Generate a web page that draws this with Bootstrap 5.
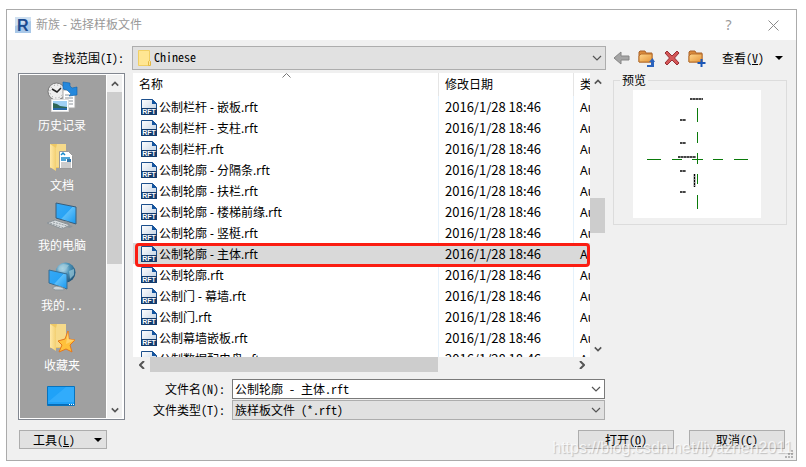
<!DOCTYPE html>
<html lang="zh-CN">
<head>
<meta charset="utf-8">
<meta name="viewport" content="width=device-width, initial-scale=1">
<title>新族 - 选择样板文件</title>
<link href="https://cdn.jsdelivr.net/npm/bootstrap@5.3.0/dist/css/bootstrap.min.css" rel="stylesheet">
<style>
body{font:12px/16px "Noto Sans","Noto Sans CJK SC",sans-serif;color:#000;background:#fff;padding:9px 9px 5px 6px}
.dlg{border:1px solid #ababab;background:#f0f0f0}
.dlg-title{height:30px;background:#fff;color:#999;padding-left:8px}
.dlg-title h1{font-size:12px;line-height:16px;font-weight:400;padding-left:5px}
.win-btn{border:0;background:none;padding:0;color:#999;width:45px;height:28px;font-size:14px}
.win-btn svg{display:block;margin:0 auto}
.ui{font-family:"Noto Sans CJK SC",sans-serif;font-feature-settings:"hwid" 1}
.ui button,.ui input,.ui select,.ui label{font-feature-settings:inherit}
.dlg-body{padding:6px 9px 11px 11px}
.lookbar{height:24px;margin-bottom:3px}
.look-label{width:106px;text-align:right}
.combo{appearance:none;border:1px solid #adadad;border-radius:0;background-color:#e1e1e1;height:20px;font-size:12px;line-height:16px;padding:0 20px 1px 2px;color:#000;min-width:0;
background-repeat:no-repeat;background-position:right 3px center;background-size:10px 6px;background-image:url("data:image/svg+xml,%3Csvg xmlns='http://www.w3.org/2000/svg' viewBox='0 0 10 6'%3E%3Cpath d='M1 1l4 4 4-4' fill='none' stroke='%23555' stroke-width='1.2'/%3E%3C/svg%3E")}
.combo-edit{background-color:#fff;border-color:#7a7a7a}
.combo-look{height:24px;padding:0 20px 3px 21px}
.look-icon{left:6px;top:4px}
.tools{width:181px;padding-left:7px}
.tool{border:0;background:none;padding:0;line-height:16px;font-size:12px;color:#000;display:flex;align-items:center}
.places{width:107px;border:1px solid #828790;background:#fff;padding:1px}
.place-list{background:#a0a0a0;padding-top:1px;overflow:hidden;margin-right:1px}
.place{display:block;width:100%;height:60px;border:0;background:none;color:#fff;padding:0 2px 0 0;font-size:12px;line-height:16px;text-align:center}
.place:last-child{height:42px}
.place svg{display:block;margin:2px auto 4px}
.sbar{background:#f0f0f0;width:15px;flex:none;display:flex;flex-direction:column;align-items:center;justify-content:space-between}
.sbar .arrow{height:17px;display:flex;align-items:center}
.thumb{background:#cdcdcd}
.v-places{margin-right:1px}
.v-places .thumb{width:15px;height:172px;margin-bottom:auto}
.v-files .thumb{width:15px;height:35px;margin:108px 0 auto}
.h-files{width:auto;height:15px;flex-direction:row;padding-right:15px}
.h-files .arrow{width:17px;justify-content:center}
.h-files .thumb{height:15px;width:63%;margin-right:auto}
.files{height:284px;overflow:hidden;background:#fff}
.files table{table-layout:fixed;width:100%;margin:0;border-collapse:separate;border-spacing:0;font-family:"Noto Sans","Noto Sans CJK SC",sans-serif;font-feature-settings:normal}
.files th{font-weight:400;height:23px;padding:0 0 0 6px;border-right:1px solid #e5e5e5;white-space:nowrap;overflow:hidden;position:relative}
.files td{height:21px;padding:2px 0 0 6px;border-right:1px solid #e5f1fb;white-space:nowrap;overflow:hidden}
.files td:first-child{padding-left:8px}
.files th:last-child,.files td:last-child{border-right:0}
.files td svg{margin:-1px 2px 0 0;vertical-align:top}
.files .stamp{font:13px/16px "Noto Sans CJK SC",sans-serif;padding-top:1px}
.c-date{width:135px}.c-type{width:16px}
.picked td{background:#d9d9d9;border-right-color:#d9d9d9}
.sort-mark{left:50%;top:0;margin-left:-4px}
.ring{left:2px;right:0;top:170px;height:24px;border:3px solid #fb1d12;border-radius:4px;pointer-events:none}
.preview{width:174px;height:152px;border:1px solid #dcdcdc;margin-left:8px}
.preview legend{float:none;width:auto;font-size:12px;line-height:14px;padding:0 2px;margin:0 0 0 6px}
.preview svg{display:block;background:#fff;margin:3px 0 0 19px}
.fields{display:grid;grid-template-columns:92px 1fr;column-gap:7px;row-gap:1px;margin-top:7px;align-items:center}
.fields label{text-align:right}
.actions{margin-top:10px}
.cmd{border:1px solid #adadad;background:#e1e1e1;height:19px;width:96px;padding:0;font-size:12px;line-height:16px;color:#000}
.cmd-tools{width:88px;margin-left:1px;padding:0 4px 0 13px}
.cmd-cancel{margin:0 2px 0 15px}
.watermark{right:13px;bottom:9px;font:16px/20px "Liberation Sans",sans-serif;color:rgba(255,255,255,.75);text-shadow:1px 1px 1px rgba(120,120,120,.4);pointer-events:none}
.grip{right:3px;bottom:2px}
</style>
<script src="https://cdn.jsdelivr.net/npm/bootstrap@5.3.0/dist/js/bootstrap.bundle.min.js"></script>
</head>
<body>
<svg width="0" height="0" class="position-absolute" aria-hidden="true">
<defs>
<linearGradient id="gp" x1="0" y1="0" x2="1" y2="1"><stop stop-color="#fff"/><stop offset="1" stop-color="#b9cbe0"/></linearGradient>
<linearGradient id="gb" x1="0" y1="0" x2="1" y2="1"><stop stop-color="#37a9f5"/><stop offset=".5" stop-color="#29a3f5"/><stop offset=".52" stop-color="#5bbefa"/><stop offset="1" stop-color="#1596ee"/></linearGradient>
<linearGradient id="gf" x1="0" y1="0" x2="1" y2="1"><stop stop-color="#ffd68c"/><stop offset="1" stop-color="#e5953a"/></linearGradient>
<linearGradient id="gy" x1="0" y1="0" x2="1" y2="0"><stop stop-color="#ffe9a8"/><stop offset="1" stop-color="#f2cf72"/></linearGradient>
<radialGradient id="gg" cx=".35" cy=".3" r=".8"><stop stop-color="#cfeaf5"/><stop offset=".45" stop-color="#4b93b8"/><stop offset="1" stop-color="#184a70"/></radialGradient>
<symbol id="rft" viewBox="0 0 16 16"><path d="M.5.5h11l4 4v11H.5z" fill="url(#gp)" stroke="#1c4f8c"/><path d="M11 0l5 5h-5z" fill="#1455a0"/><path d="M0 9h16v7H0z" fill="#123b6d"/><text x="8" y="15" text-anchor="middle" font-family="Liberation Sans,sans-serif" font-weight="700" font-size="7" fill="#fff">RFT</text></symbol>
<symbol id="up" viewBox="0 0 10 6"><path d="M1 5l4-4 4 4" fill="none" stroke="#555" stroke-width="2"/></symbol>
<symbol id="down" viewBox="0 0 10 6"><path d="M1 1l4 4 4-4" fill="none" stroke="#555" stroke-width="2"/></symbol>
<symbol id="fold" viewBox="0 0 18 17"><path d="M1 2l1-1h5l1 2h6v9H1z" fill="#d9893b" stroke="#a9632a"/><path d="M1 12V6l2-2h11v8z" fill="url(#gf)" stroke="#b9712c"/></symbol>
<symbol id="yfold" viewBox="0 0 32 32"><path d="M4 3h16v24H4z" fill="#eec864"/><path d="M4 3l6 4v23l-6-4z" fill="url(#gy)"/><path d="M10 7l1-4h9v23H10z" fill="#f6da8a"/></symbol>
</defs>
</svg>
<main class="dlg position-relative">
<header class="dlg-title d-flex align-items-center">
<svg width="16" height="16" viewBox="0 0 16 16" aria-hidden="true"><path d="M0 0h16v16H0z" fill="#cfe0f1"/><path d="M0 9l16-5v12H0z" fill="#a9c8e8"/><text x="2" y="14" font-family="Liberation Sans,sans-serif" font-weight="700" font-size="16" fill="#1b4b8f">R</text></svg>
<h1 class="m-0 flex-grow-1">新族 - 选择样板文件</h1>
<button class="win-btn" type="button" aria-label="帮助">?</button>
<button class="win-btn" type="button" aria-label="关闭"><svg width="11" height="11" viewBox="0 0 11 11"><path d="M.5.5l10 10M10.500.5l-10 10" stroke="#8a8a8a" fill="none"/></svg></button>
</header>
<div class="dlg-body ui">
<div class="lookbar d-flex align-items-center">
<label class="look-label flex-shrink-0" for="look">查找范围(I):</label>
<div class="position-relative flex-grow-1 ms-2">
<select class="combo combo-look w-100 d-block" id="look"><option>Chinese</option></select>
<svg class="look-icon position-absolute" width="14" height="17" viewBox="0 0 14 17" aria-hidden="true"><path d="M.5.5h11v15H.5z" fill="#ffe692" stroke="#f1cf63"/><path d="M10.500 15.500v-4l1-1 1 1v4z" fill="#ffe692" stroke="#e4b944"/></svg>
</div>
<div class="tools d-flex align-items-center flex-shrink-0">
<button class="tool" type="button" aria-label="后退"><svg width="17" height="16" viewBox="0 0 17 16"><path d="M1 8l7-6v4h8v4H8v4z" fill="#a5a5a5" stroke="#858585"/></svg></button>
<button class="tool ms-2" type="button" aria-label="上一级"><svg width="18" height="17"><use href="#fold" width="18" height="17"/><path d="M9 15h4v-3h-2l3.500-4L17 12h-1v5H9z" fill="#2b63bd"/></svg></button>
<button class="tool ms-2" type="button" aria-label="删除"><svg width="16" height="16" viewBox="0 0 16 16"><path d="M3 1l5 5 5-5 2 2-4.500 5L15 13l-2 2-5-5-5 5-2-2 4.500-5L1 3z" fill="#d45757" stroke="#982e35"/></svg></button>
<button class="tool ms-2" type="button" aria-label="新建文件夹"><svg width="18" height="17"><use href="#fold" width="18" height="17"/><path d="M12.500 9h2v3h3v2h-3v3h-2v-3h-3v-2h3z" fill="#1a57b8"/></svg></button>
<button class="tool flex-grow-1 ms-3" type="button">查看(<u>V</u>)<svg class="ms-auto me-1" width="8" height="4" viewBox="0 0 8 4"><path d="M0 0h8L4 4z"/></svg></button>
</div>
</div>
<div class="d-flex">
<nav class="places d-flex me-2 flex-shrink-0" aria-label="位置">
<div class="place-list flex-grow-1">
<button class="place" type="button"><svg width="32" height="32" viewBox="0 0 32 32"><circle cx="10.500" cy="10.500" r="8.500" fill="#eee" stroke="#777"/><circle cx="10.500" cy="10.500" r="6.500" fill="none" stroke="#999" stroke-dasharray="1 2.400"/><path d="M6 8l5 3 4-4" fill="none" stroke="#222" stroke-width="1.500"/><path d="M17 9h12v18H17z" fill="#fff" stroke="#aaa"/><path d="M19 14h8M19 17h8M19 20h8M19 23h8" stroke="#8b9299"/><path d="M17 1l7 1v3l2 2 5-1v8l-8 1 2-2-4-4-4-1z" fill="#2488dc" stroke="#0e63ae" stroke-width=".6"/><path d="M5.500 18.500h17v12h-17z" fill="#fff" stroke="#ddd"/><path d="M7 20h14v9H7z" fill="#9fd0f4"/><path d="M7 22l4 1 3 2 7 1v3H7z" fill="#2e6656"/><path d="M7 27h14v2H7z" fill="#2869a8"/></svg>历史记录</button>
<button class="place" type="button"><svg width="32" height="32" viewBox="0 0 32 32"><use href="#yfold"/><path d="M13.500 10.500h9l4 4v13h-13z" fill="#fff" stroke="#999"/><path d="M15 14l2-2 2 2M15 17h9M15 19h5" stroke="#1489cc" fill="none" stroke-width="1.500"/><path d="M21 18h4v3h-4z" fill="#3577aa"/><path d="M15 22h10M15 24h10M15 26h10" stroke="#9a9a9a"/></svg>文档</button>
<button class="place" type="button"><svg width="32" height="32" viewBox="0 0 32 32"><path d="M10 2l20 4v17l-20-6z" fill="url(#gb)" stroke="#385e7c"/><path d="M19 20l4 1v3l4 1-3 2-7-2z" fill="#8b959b"/><path d="M1 22l8-3 15 5-8 4z" fill="#d9dee1" stroke="#8b9398"/><path d="M4 22l14 5M7 21l14 4" stroke="#939b9f" stroke-dasharray="2 1"/></svg>我的电脑</button>
<button class="place" type="button"><svg width="32" height="32" viewBox="0 0 32 32"><circle cx="19.500" cy="11.500" r="10" fill="url(#gg)"/><path d="M12 8l5-5 6 1-3 4-5 2zM23 10l5-2v6l-4 4z" fill="#9bc9d8" opacity=".7"/><path d="M3 9l18 4v15L3 22z" fill="url(#gb)" stroke="#3a6d91"/><path d="M10 25l5 1 4 2-2 1H9l-3-2z" fill="#ccd4d8" stroke="#8d979c"/></svg>我的...</button>
<button class="place" type="button"><svg width="32" height="32" viewBox="0 0 32 32"><use href="#yfold"/><path d="M22 10l1 8 6 1-5 5 2 7-6-3-7 3 3-7-4-4 7-2z" fill="#ffc13b" stroke="#e5781c"/><path d="M22 10l1 8 6 1-9 4z" fill="#ffe08a" opacity=".6"/></svg>收藏夹</button>
<button class="place" type="button" aria-label="桌面"><svg width="32" height="32" viewBox="0 0 32 32"><path d="M1.500 6.500h27v19h-27z" fill="#1fa2f8" stroke="#0873bd"/><path d="M2 22L20 7h8v15z" fill="#3db2ff" opacity=".6"/><path d="M2 24.500h26" stroke="#086bb5"/><path d="M23 24.500h5" stroke="#fff" stroke-dasharray="1 1"/></svg></button>
</div>
<div class="sbar v-places"><span class="arrow"><svg width="8" height="6"><use href="#up"/></svg></span><span class="thumb"></span><span class="arrow"><svg width="8" height="6"><use href="#down"/></svg></span></div>
</nav>
<div class="flex-grow-1">
<div class="d-flex">
<div class="flex-grow-1">
<div class="d-flex">
<div class="files flex-grow-1 position-relative">
<table>
<colgroup><col><col class="c-date"><col class="c-type"></colgroup>
<thead><tr><th scope="col">名称<svg class="sort-mark position-absolute" width="9" height="5" viewBox="0 0 9 5"><path d="M.5 4.500l4-4 4 4" fill="none" stroke="#777"/></svg></th><th scope="col">修改日期</th><th scope="col">类型</th></tr></thead>
<tbody>
<tr><td><svg width="16" height="16"><use href="#rft"/></svg>公制栏杆 - 嵌板.rft</td><td class="stamp">2016/1/28 18:46</td><td>Autodesk</td></tr>
<tr><td><svg width="16" height="16"><use href="#rft"/></svg>公制栏杆 - 支柱.rft</td><td class="stamp">2016/1/28 18:46</td><td>Autodesk</td></tr>
<tr><td><svg width="16" height="16"><use href="#rft"/></svg>公制栏杆.rft</td><td class="stamp">2016/1/28 18:46</td><td>Autodesk</td></tr>
<tr><td><svg width="16" height="16"><use href="#rft"/></svg>公制轮廓 - 分隔条.rft</td><td class="stamp">2016/1/28 18:46</td><td>Autodesk</td></tr>
<tr><td><svg width="16" height="16"><use href="#rft"/></svg>公制轮廓 - 扶栏.rft</td><td class="stamp">2016/1/28 18:46</td><td>Autodesk</td></tr>
<tr><td><svg width="16" height="16"><use href="#rft"/></svg>公制轮廓 - 楼梯前缘.rft</td><td class="stamp">2016/1/28 18:46</td><td>Autodesk</td></tr>
<tr><td><svg width="16" height="16"><use href="#rft"/></svg>公制轮廓 - 竖梃.rft</td><td class="stamp">2016/1/28 18:46</td><td>Autodesk</td></tr>
<tr class="picked"><td><svg width="16" height="16"><use href="#rft"/></svg>公制轮廓 - 主体.rft</td><td class="stamp">2016/1/28 18:46</td><td>Autodesk</td></tr>
<tr><td><svg width="16" height="16"><use href="#rft"/></svg>公制轮廓.rft</td><td class="stamp">2016/1/28 18:46</td><td>Autodesk</td></tr>
<tr><td><svg width="16" height="16"><use href="#rft"/></svg>公制门 - 幕墙.rft</td><td class="stamp">2016/1/28 18:46</td><td>Autodesk</td></tr>
<tr><td><svg width="16" height="16"><use href="#rft"/></svg>公制门.rft</td><td class="stamp">2016/1/28 18:46</td><td>Autodesk</td></tr>
<tr><td><svg width="16" height="16"><use href="#rft"/></svg>公制幕墙嵌板.rft</td><td class="stamp">2016/1/28 18:46</td><td>Autodesk</td></tr>
<tr><td><svg width="16" height="16"><use href="#rft"/></svg>公制数据配电盘.rft</td><td class="stamp">2016/1/28 18:46</td><td>Autodesk</td></tr>
</tbody>
</table>
<div class="ring position-absolute"></div>
</div>
<div class="sbar v-files"><span class="arrow"><svg width="8" height="6"><use href="#up"/></svg></span><span class="thumb"></span><span class="arrow"><svg width="8" height="6"><use href="#down"/></svg></span></div>
</div>
<div class="sbar h-files"><span class="arrow"><svg width="6" height="8" viewBox="0 0 6 8"><path d="M5 0L1 4l4 4" fill="none" stroke="#555" stroke-width="2"/></svg></span><span class="thumb"></span><span class="arrow"><svg width="6" height="8" viewBox="0 0 6 8"><path d="M1 0l4 4-4 4" fill="none" stroke="#555" stroke-width="2"/></svg></span></div>
<div class="fields">
<label for="fname">文件名(N):</label><input class="combo combo-edit" id="fname" type="text" value="公制轮廓 - 主体.rft">
<label for="ftype">文件类型(T):</label><select class="combo" id="ftype"><option>族样板文件 (*.rft)</option></select>
</div>
</div>
<fieldset class="preview flex-shrink-0">
<legend>预览</legend>
<svg width="128" height="128" viewBox="0 0 128 128" role="img" aria-label="样板预览">
<path d="M64.500 18v14m0 10v11m0 10v11m0 10v10m0 11v14M14 69.500h14m11 0h10m10 0h11m10 0h10m11 0h14" stroke="#0a7a0a" fill="none"/>
<path d="M57 9h13M47 30h6M47 53h6M45 67h18M47 81h6M47 102h6M61.500 84v13" stroke="#888" stroke-width="2" fill="none"/>
<path d="M57 9h13M47 30h6M47 53h6M45 67h18M47 81h6M47 102h6M61.500 84v13" stroke="#000" stroke-width="1" stroke-dasharray="2 1" fill="none"/>
</svg>
</fieldset>
</div>
</div>
</div>
<div class="actions d-flex">
<button class="cmd cmd-tools d-flex align-items-center me-auto" type="button">工具(<u>L</u>)<svg class="ms-auto" width="8" height="4" viewBox="0 0 8 4"><path d="M0 0h8L4 4z"/></svg></button>
<button class="cmd" type="button">打开(<u>O</u>)</button>
<button class="cmd cmd-cancel" type="button">取消(C)</button>
</div>
</div>
<svg class="grip position-absolute" width="8" height="8" viewBox="0 0 8 8" aria-hidden="true"><path d="M6 0h2v2H6zM3 3h2v2H3zM6 3h2v2H6zM0 6h2v2H0zM3 6h2v2H3zM6 6h2v2H6z" fill="#b4b4b4"/></svg>
</main>
<div class="watermark position-absolute">https://blog.csdn.net/liyazhen2011</div>
</body>
</html>
